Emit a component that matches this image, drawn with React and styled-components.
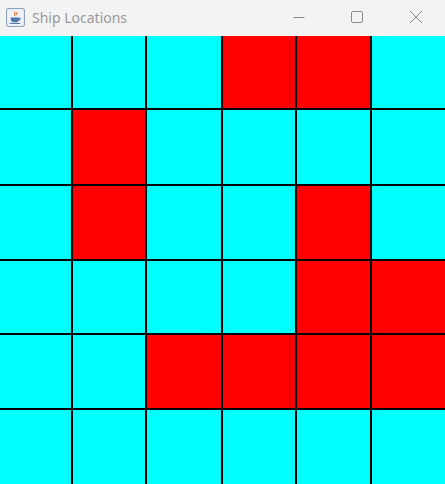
import styled, { createGlobalStyle } from 'styled-components';

const GlobalStyle = createGlobalStyle`
  html, body {
    margin: 0;
    padding: 0;
    background: #f3f3f3;
    overflow: hidden;
  }
`;

// r = ship cell, . = water
const board = [
  '...rr.',
  '.r....',
  '.r..r.',
  '....rr',
  '..rrrr',
  '......',
];

const JavaIcon = () => (
  <svg width="19" height="19" viewBox="0 0 18 18">
    <rect x="0.5" y="0.5" width="17" height="17" rx="2" fill="#eef1f5" stroke="#8da2bd" />
    <path d="M8 3.5c1.6 1.2-1 2.2.4 3.8M10 4c1 .9-.6 1.6.2 2.6" stroke="#e2772a" strokeWidth="1.1" fill="none" />
    <path d="M4.5 9h8v1.6c0 1.8-1.6 3-4 3s-4-1.2-4-3z" fill="#4f73a8" />
    <path d="M12.5 9.6c1.3 0 1.5 1.6-.3 2" stroke="#4f73a8" fill="none" />
    <path d="M3.5 14.6h10" stroke="#4f73a8" strokeWidth="1" />
  </svg>
);

const TitleButtons = () => (
  <Controls>
    <ControlButton w={58}>
      <svg width="12" height="12" viewBox="0 0 12 12">
        <path d="M0.5 6.5h11" stroke="#8a8a8a" strokeWidth="1" />
      </svg>
    </ControlButton>
    <ControlButton w={58}>
      <svg width="12" height="12" viewBox="0 0 12 12">
        <rect x="0.5" y="0.5" width="11" height="11" rx="1.5" fill="none" stroke="#8a8a8a" />
      </svg>
    </ControlButton>
    <ControlButton w={59}>
      <svg width="14" height="14" viewBox="0 0 14 14">
        <path d="M1 1l12 12M13 1L1 13" stroke="#8a8a8a" strokeWidth="1" />
      </svg>
    </ControlButton>
  </Controls>
);

const App = () => {
  return (
    <Window>
      <GlobalStyle />
      <TitleBar>
        <TitleLeft>
          <JavaIcon />
          <TitleText>Ship Locations</TitleText>
        </TitleLeft>
        <TitleButtons />
      </TitleBar>
      <Grid>
        {board.map((row, r) =>
          row.split('').map((c, col) => <Cell key={r + '-' + col} ship={c === 'r'} />)
        )}
      </Grid>
    </Window>
  );
};

const Window = styled.div`
  width: 445px;
  height: 484px;
  display: flex;
  flex-direction: column;
  background: #f3f3f3;
`;

const TitleBar = styled.div`
  height: 36px;
  flex-shrink: 0;
  display: flex;
  align-items: center;
  justify-content: space-between;
  background: #f3f3f3;
`;

const TitleLeft = styled.div`
  display: flex;
  align-items: center;
  gap: 7px;
  padding-left: 6px;
  padding-bottom: 2px;
`;

const TitleText = styled.span`
  font-family: 'Noto Sans', 'Open Sans', sans-serif;
  font-size: 14px;
  color: #9a9a9a;
`;

const Controls = styled.div`
  display: flex;
  align-items: center;
  height: 100%;
  padding-bottom: 2px;
`;

const ControlButton = styled.div`
  width: ${({ w }) => w}px;
  height: 100%;
  display: flex;
  align-items: center;
  justify-content: center;
`;

const Grid = styled.div`
  flex: 1;
  display: grid;
  grid-template-columns: 71px 72px 74px 72px 73px 1fr;
  grid-template-rows: 72px 74px 73px 72px 73px 1fr;
  gap: 2px;
  background: #000;
`;

const Cell = styled.div`
  background: ${({ ship }) => (ship ? '#ff0000' : '#00ffff')};
`;

export default App;
